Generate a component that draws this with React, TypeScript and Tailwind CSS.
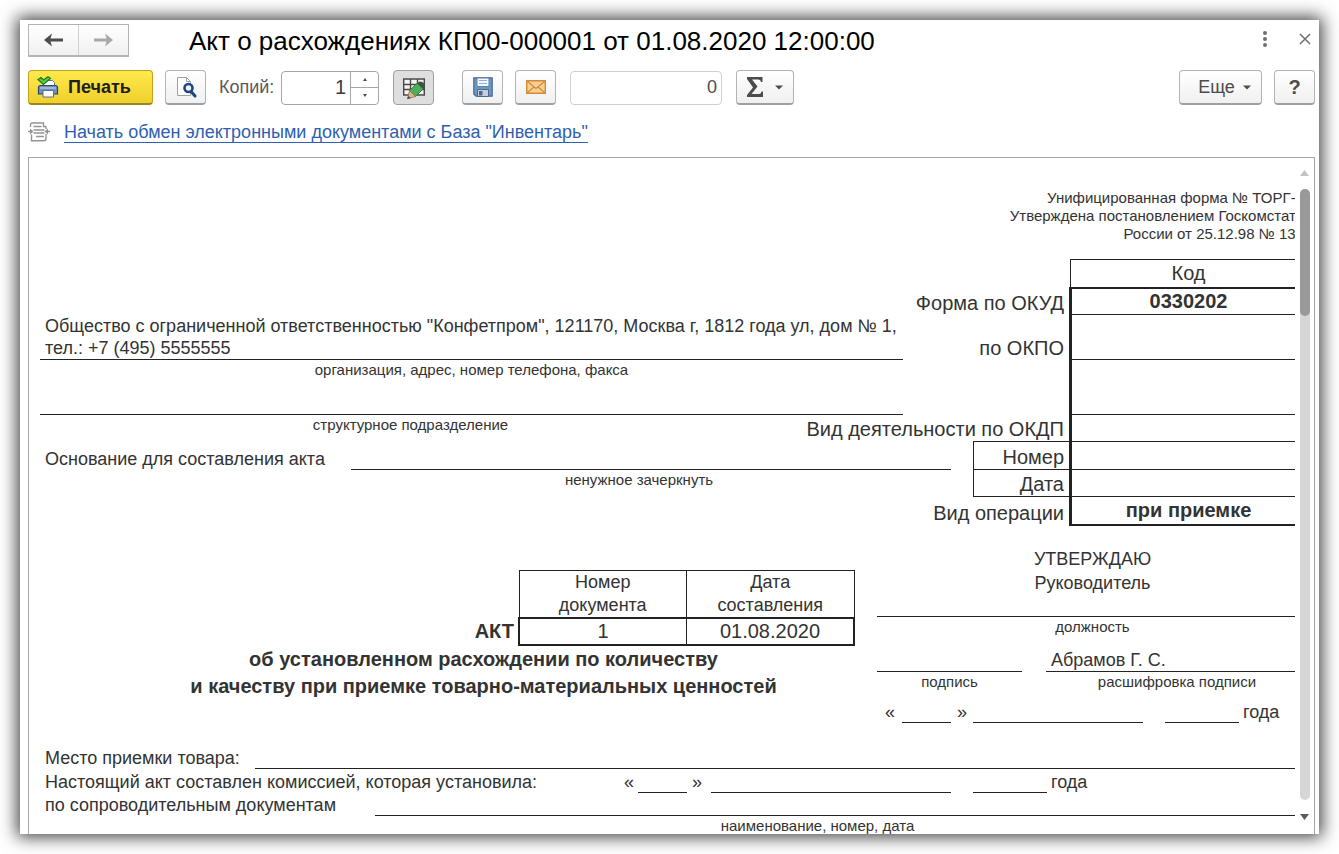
import type { ReactNode } from 'react';

const BTN = 'flex items-center justify-center h-[35px] shrink-0 rounded border border-[#b4b4b4] border-b-2 border-b-[#a0a0a0] bg-linear-to-b from-white to-[#f0f0f0] text-[#4c4c4c]';

const CODE_ROWS = [
  { label: 'Форма по ОКУД', value: '0330202', height: 'h-[27px]', boxed: false },
  { label: 'по ОКПО', value: '', height: 'h-[45px]', boxed: false },
  { label: '', value: '', height: 'h-[55px]', boxed: false },
  { label: 'Вид деятельности по ОКДП', value: '', height: 'h-[27px]', boxed: false },
  { label: 'Номер', value: '', height: 'h-[28px]', boxed: true },
  { label: 'Дата', value: '', height: 'h-[27px]', boxed: true },
  { label: 'Вид операции', value: 'при приемке', height: 'h-[28px]', boxed: false },
];

function Caption({ children, className = '' }: { children: ReactNode; className?: string }) {
  return <div className={'text-center text-[15px] leading-5 ' + className}>{children}</div>;
}

function PrintIcon() {
  return (
    <svg width="22" height="22" viewBox="0 0 22 22" fill="none">
      <path d="M6.5 4.500h9l2 2V11h-11z" fill="#fff" stroke="#5f7896" />
      <path d="M1.500 11.500q0-2 2-2h15q2 0 2 2v6.500h-19z" fill="#6f90bb" stroke="#2d4769" strokeWidth="1.200" />
      <path d="M3 12h16" stroke="#c3d4ea" strokeWidth="1.200" />
      <path d="M6 14.500h10.500V21H6z" fill="#fff" stroke="#55729a" />
      <path d="M1 3.500L4 1.500l2.500 2.500L11 .7l2.500 1.600L6.500 8.500z" fill="#55cf45" stroke="#1f7a22" strokeWidth="1.200" />
    </svg>
  );
}

function PreviewIcon() {
  return (
    <svg width="22" height="22" viewBox="0 0 22 22" fill="none">
      <path d="M2.500 1.500h9l4 4v14h-13z" fill="#fff" stroke="#9aa0a8" />
      <path d="M11.500 1.500v4h4" stroke="#9aa0a8" />
      <circle cx="13.500" cy="12" r="4" fill="#eef4fb" stroke="#1f4583" strokeWidth="2.600" />
      <path d="M16.500 16l3.500 4" stroke="#1f4583" strokeWidth="3" strokeLinecap="round" />
    </svg>
  );
}

function EditTableIcon() {
  return (
    <svg width="24" height="22" viewBox="0 0 24 22" fill="none">
      <path d="M1.500 1.500h21v17h-21z" fill="#f4f4f4" />
      <path d="M1 2h22M1 7.500h22M1 12.500h22M1 18h22M1.700 2v16M8.500 2v16M15.500 2v16M22.300 2v16" stroke="#484848" strokeWidth="1.400" />
      <path d="M7.500 13.500L16 5.500l6 5.500-8.500 8.500z" fill="#4fae58" stroke="#347d3e" />
      <path d="M15 6.500l2.500-2Q22.500 4.500 23 9.500l-2 2.500z" fill="#3f5443" />
      <path d="M7.500 13.500l6 6L5.500 22z" fill="#dcb48a" stroke="#94704c" strokeWidth=".8" />
      <path d="M6.500 19l2 2L5 22z" fill="#444" />
    </svg>
  );
}

function SaveIcon() {
  return (
    <svg width="20" height="20" viewBox="0 0 20 20" fill="none">
      <path d="M.8.800h18.400v18.400H3L.8 17z" fill="#6d98c6" stroke="#45698f" strokeWidth="1.200" />
      <path d="M4 1h12v8.500H4z" fill="#f7fafd" stroke="#5c80a8" />
      <path d="M6 3.500h8M6 6.500h8" stroke="#8fb0d6" />
      <path d="M4.500 12.500h11v7h-11z" fill="#c9ced4" stroke="#45698f" />
      <path d="M6 14h3.500v4.500H6z" fill="#45698f" />
    </svg>
  );
}

function MailIcon() {
  return (
    <svg width="20" height="14" viewBox="0 0 20 14" fill="none">
      <path d="M.7.700h18.600v12.600H.7z" fill="#fbcf92" stroke="#cf8a3c" strokeWidth="1.400" />
      <path d="M1.500 1.500L10 8.500l8.500-7M1.500 12.500l6.500-5.500M18.500 12.500L12 7" stroke="#cf8a3c" strokeWidth="1.200" />
    </svg>
  );
}

function ExchangeIcon() {
  return (
    <svg width="22" height="20" viewBox="0 0 22 20" fill="none" stroke="#949494" strokeWidth="1.400">
      <path d="M2.500 5V3q0-2 2-2h11v3.500h3M18 4.500V7" />
      <path d="M5.500 4.500h8M5.500 8h11M5.500 11h11M8 14.500h8" />
      <path d="M3.500 12.500v6.300h12q2.500 0 2.500-2.500V12" />
      <path d="M0 9.500h3M22 9.500h-3" />
      <path d="M2 6.500l3.500 3L2 12.500zM20 6.500l-3.500 3 3.500 3z" fill="#949494" stroke="none" />
    </svg>
  );
}

function Caret() {
  return (
    <svg width="8" height="5" viewBox="0 0 8 5"><path d="M0 .5h8L4 4.500z" fill="#4c4c4c" /></svg>
  );
}

export default function App() {
  return (
    <div className="h-screen p-5 bg-white font-['Liberation_Sans',Arial,sans-serif]">
      <div className="flex flex-col h-full bg-white overflow-hidden pt-1 pl-2 pr-1 shadow-[0_0_16px_3px_rgba(0,0,0,0.75)]">
        {/* Title bar */}
        <div className="flex items-center h-[33px] shrink-0">
          <div className="flex w-[101px] h-[33px] shrink-0 border border-[#b4b4b4] border-b-2 bg-linear-to-b from-white to-[#f0f0f0]">
            <button aria-label="Назад" className="flex flex-1 items-center justify-center border-r border-[#d0d0d0]">
              <svg width="20" height="14" viewBox="0 0 20 14"><path d="M0 7l8-6.500-1.500 5H19v3H6.500l1.500 5z" fill="#4c4c4c" /></svg>
            </button>
            <button aria-label="Вперед" className="flex flex-1 items-center justify-center">
              <svg width="20" height="14" viewBox="0 0 20 14"><path d="M19 7l-8-6.500 1.500 5H0v3h12.500l-1.500 5z" fill="#a8a8a8" /></svg>
            </button>
          </div>
          <h1 className="ml-[60px] flex-1 text-[26px] leading-8 text-black whitespace-nowrap">Акт о расхождениях КП00-000001 от 01.08.2020 12:00:00</h1>
          <button aria-label="Меню" className="flex items-center justify-center w-6 h-6 mb-1">
            <svg width="4" height="16" viewBox="0 0 4 16" fill="#6f6f6f"><circle cx="2" cy="2" r="2" /><circle cx="2" cy="8" r="2" /><circle cx="2" cy="14" r="2" /></svg>
          </button>
          <button aria-label="Закрыть" className="flex items-center justify-center w-5 h-6 ml-[18px] mb-1">
            <svg width="12" height="12" viewBox="0 0 12 12"><path d="M1 1l10 10M11 1L1 11" stroke="#6f6f6f" strokeWidth="1.500" /></svg>
          </button>
        </div>

        {/* Toolbar */}
        <div className="flex items-center h-[35px] mt-[13px] shrink-0">
          <button className="flex items-center h-[35px] w-[125px] shrink-0 pl-2 gap-[9px] rounded border border-[#c0a21c] border-b-2 border-b-[#9c8420] bg-linear-to-b from-[#ffe94a] to-[#efd02c] text-[18px] font-bold text-[#1e1e1e]">
            <PrintIcon />Печать
          </button>
          <button aria-label="Просмотр" className={BTN + ' w-[41px] ml-3'}><PreviewIcon /></button>
          <label htmlFor="copies" className="ml-[13px] w-[62px] shrink-0 text-[18px] text-[#5a5a5a]">Копий:</label>
          <div className="flex w-[98px] h-[34px] shrink-0 rounded border border-[#a6a6a6]">
            <input id="copies" defaultValue="1" className="w-[68px] h-full pr-1 text-right text-[20px] text-[#3c3c3c] outline-none" />
            <div className="flex flex-col flex-1 border-l border-[#a6a6a6]">
              <button aria-label="Больше" className="flex flex-1 items-center justify-center border-b border-[#a6a6a6]">
                <svg width="4" height="3" viewBox="0 0 4 3"><path d="M0 3l2-3 2 3z" fill="#4c4c4c" /></svg>
              </button>
              <button aria-label="Меньше" className="flex flex-1 items-center justify-center">
                <svg width="4" height="3" viewBox="0 0 4 3"><path d="M0 0l2 3 2-3z" fill="#4c4c4c" /></svg>
              </button>
            </div>
          </div>
          <button aria-label="Редактировать" className="flex items-center justify-center w-[41px] h-[35px] ml-[14px] shrink-0 rounded border border-[#a0a0a0] bg-[#dedede]"><EditTableIcon /></button>
          <button aria-label="Сохранить" className={BTN + ' w-[41px] ml-7'}><SaveIcon /></button>
          <button aria-label="Отправить" className={BTN + ' w-[41px] ml-3'}><MailIcon /></button>
          <input aria-label="Сумма" defaultValue="0" className="w-[152px] h-[34px] ml-[14px] shrink-0 px-1 rounded border border-[#d0d0d0] text-right text-[18px] text-[#4c4c4c] outline-none" />
          <button aria-label="Итоги" className={BTN + ' w-[58px] ml-[14px] gap-3'}>
            <svg width="16" height="20" viewBox="0 0 16 20"><path d="M0 0h15.500v5h-1.500q-.3-2.500-2.500-2.500H5l5.500 7L4.500 17H12q2 0 2.500-2.500H16V20H0v-2l6-7.500L0 2z" fill="#4c4c4c" /></svg>
            <Caret />
          </button>
          <div className="flex-1" />
          <button className={BTN + ' w-[83px] pl-2 gap-2 text-[18px]'}>Еще<Caret /></button>
          <button aria-label="Справка" className={BTN + ' w-[41px] ml-3 text-[20px] font-bold text-[#2c2c2c]'}>?</button>
        </div>

        <div className="flex items-center h-[52px] pt-px shrink-0 gap-[14px]">
          <ExchangeIcon />
          <a href="#" className="mt-[2px] text-[18px] leading-5 text-[#2f5fb0] border-b border-[#2f5fb0]">Начать обмен электронными документами с База "Инвентарь"</a>
        </div>

        {/* Printed form */}
        <div className="flex flex-1 min-h-0 border border-b-0 border-[#a6a6a6] text-[#333]">
          <div className="flex-1 min-w-0 overflow-hidden pl-[11px]">
            <div className="-mr-[13px] text-[18px] leading-[22px]">
              <div className="pt-[31px] pr-1 text-right text-[15px] leading-[18px]">
                <p>Унифицированная форма № ТОРГ-2</p>
                <p>Утверждена постановлением Госкомстата</p>
                <p>России от 25.12.98 № 132</p>
              </div>

              <div className="flex gap-[22px] mt-4">
                <div className="flex-1 min-w-0 pt-14">
                  <div className="mr-12 pl-[5px] border-b border-[#222] whitespace-nowrap">
                    Общество с ограниченной ответственностью "Конфетпром", 121170, Москва г, 1812 года ул, дом № 1,<br />тел.: +7 (495) 5555555
                  </div>
                  <Caption className="mr-12">организация, адрес, номер телефона, факса</Caption>
                  <div className="h-[35px] mr-12 border-b border-[#222]" />
                  <Caption className="mr-12 pr-[122px]">структурное подразделение</Caption>
                  <div className="flex items-end h-[35px]">
                    <span className="w-[311px] pl-[5px] shrink-0">Основание для составления акта</span>
                    <span className="flex-1 border-b border-[#222]" />
                  </div>
                  <Caption className="ml-[311px] pr-6">ненужное зачеркнуть</Caption>
                </div>

                <table className="table-fixed border-collapse w-[335px] shrink-0 text-[20px] leading-6">
                  <colgroup><col className="w-[97px]" /><col /></colgroup>
                  <thead>
                    <tr className="h-[28px]">
                      <td className="p-0" />
                      <th className="p-0 font-normal border-t border-l border-r border-[#222]">Код</th>
                    </tr>
                  </thead>
                  <tbody>
                    {CODE_ROWS.map((row, i) => (
                      <tr key={i} className={row.height}>
                        <td className={'p-0 align-bottom ' + (row.boxed ? 'border border-[#222]' : '')}>
                          <div className="flex justify-end pr-[5px] whitespace-nowrap">{row.label}</div>
                        </td>
                        <td className={'p-0 text-center font-bold border-[#222] border-l-3 border-r-3 '
                          + (i === 0 ? 'border-t-2 border-b' : i === CODE_ROWS.length - 1 ? 'border-t border-b-2' : 'border-y')}>{row.value}</td>
                      </tr>
                    ))}
                  </tbody>
                </table>
              </div>

              <div className="flex gap-[22px]">
                <div className="flex-1 min-w-0 pt-11">
                  <div className="flex items-end justify-end">
                    <span className="pr-1 pb-[5px] text-[20px] leading-5 font-bold">АКТ</span>
                    <table className="table-fixed border-collapse w-[337px] text-center">
                      <thead>
                        <tr className="h-[47px] leading-[23px]">
                          <th className="p-0 font-normal border border-[#222]">Номер<br />документа</th>
                          <th className="p-0 font-normal border border-[#222]">Дата<br />составления</th>
                        </tr>
                      </thead>
                      <tbody className="border-2 border-[#222]">
                        <tr className="h-[27px] text-[20px]">
                          <td className="p-0 border-r border-[#222]">1</td>
                          <td className="p-0">01.08.2020</td>
                        </tr>
                      </tbody>
                    </table>
                  </div>
                  <div className="pl-[72px] text-center text-[20px] leading-[27px] font-bold">
                    <p>об установленном расхождении по количеству</p>
                    <p>и качеству при приемке товарно-материальных ценностей</p>
                  </div>
                </div>

                <div className="w-[431px] shrink-0 pt-[21px]">
                  <div className="text-center leading-6">
                    <p>УТВЕРЖДАЮ</p>
                    <p>Руководитель</p>
                  </div>
                  <div className="h-[22px] border-b border-[#222]" />
                  <Caption>должность</Caption>
                  <div className="flex gap-6">
                    <div className="w-[145px]">
                      <div className="h-[35px] border-b border-[#222]" />
                      <Caption>подпись</Caption>
                    </div>
                    <div className="flex-1">
                      <div className="flex items-end h-[35px] pl-[5px] border-b border-[#222]">Абрамов Г. С.</div>
                      <Caption>расшифровка подписи</Caption>
                    </div>
                  </div>
                  <div className="flex items-end h-[31px] pl-2">
                    <span className="w-[17px]">«</span>
                    <span className="w-[49px] border-b border-[#222]" />
                    <span className="w-[22px] text-center">»</span>
                    <span className="w-[170px] border-b border-[#222]" />
                    <span className="w-[74px] ml-[22px] border-b border-[#222]" />
                    <span className="pl-1">года</span>
                  </div>
                </div>
              </div>

              <div className="mt-[23px]">
                <div className="flex items-end h-[23px]">
                  <span className="w-[215px] pl-[5px] shrink-0">Место приемки товара:</span>
                  <span className="flex-1 border-b border-[#222]" />
                </div>
                <div className="flex items-end h-6">
                  <span className="w-[584px] pl-[5px] shrink-0">Настоящий акт составлен комиссией, которая установила:</span>
                  <span className="w-[14px]">«</span>
                  <span className="w-[49px] border-b border-[#222]" />
                  <span className="w-6 pl-[5px]">»</span>
                  <span className="w-[240px] border-b border-[#222]" />
                  <span className="w-[74px] ml-[22px] border-b border-[#222]" />
                  <span className="pl-1">года</span>
                </div>
                <div className="flex items-end h-[23px]">
                  <span className="w-[335px] pl-[5px] shrink-0">по сопроводительным документам</span>
                  <span className="flex-1 border-b border-[#222]" />
                </div>
                <Caption className="ml-[335px] pr-12">наименование, номер, дата</Caption>
              </div>
            </div>
          </div>

          {/* Scrollbar */}
          <div className="flex flex-col items-center w-[19px] shrink-0 pt-3 pb-[14px]">
            <svg width="9" height="6" viewBox="0 0 9 6"><path d="M0 6l4.500-6L9 6z" fill="#c4c4c4" /></svg>
            <div className="flex-1 w-[10px] mt-[13px] mb-[14px] rounded-full bg-[#d6d6d6]">
              <div className="h-[127px] rounded-full bg-[#999]" />
            </div>
            <svg width="9" height="6" viewBox="0 0 9 6"><path d="M0 0h9L4.500 6z" fill="#5a5a5a" /></svg>
          </div>
        </div>
      </div>
    </div>
  );
}
